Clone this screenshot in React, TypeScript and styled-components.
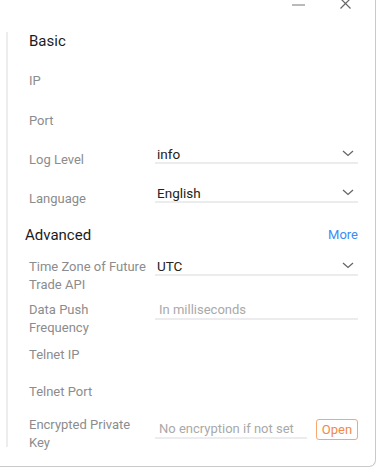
import styled, { createGlobalStyle } from 'styled-components';

const GlobalStyle = createGlobalStyle`
  html, body {
    margin: 0;
    padding: 0;
    background: #ffffff;
  }
  body {
    font-family: Roboto, "Noto Sans", sans-serif;
  }
`;

const Window = styled.div`
  position: relative;
  box-sizing: border-box;
  width: 376px;
  height: 467px;
  background: #fff;
  border-right: 1px solid #c9c9c9;
  border-bottom: 1px solid #c9c9c9;
  border-bottom-right-radius: 7px;
  overflow: hidden;
`;

const TitleBar = styled.div`
  height: 32px;
  display: flex;
  justify-content: flex-end;
  align-items: flex-start;
  padding-right: 24px;
  gap: 35px;
`;

const WinButton = styled.div<{ $top: number }>`
  margin-top: ${p => p.$top}px;
  display: flex;
`;

const Panel = styled.div`
  margin-left: 6px;
  border-left: 2px solid #ededed;
  height: 415px;
  padding-left: 21px;
  padding-right: 17px;
`;

const Heading = styled.div<{ $h: number; $indent?: number }>`
  height: ${p => p.$h}px;
  display: flex;
  justify-content: space-between;
  align-items: flex-start;
  margin-left: ${p => p.$indent ?? 0}px;
  font-size: 15px;
  line-height: 18px;
  color: #1c1c1c;
`;

const MoreLink = styled.span`
  font-size: 13px;
  color: #3b8cf5;
  line-height: 18px;
`;

const Row = styled.div<{ $h: number }>`
  height: ${p => p.$h}px;
  display: grid;
  grid-template-columns: 126px 1fr;
  align-items: start;
`;

const Label = styled.div<{ $offset?: number }>`
  padding-top: ${p => p.$offset ?? 0}px;
  font-size: 13px;
  line-height: 18px;
  color: #8c8c8c;
`;

const Select = styled.div`
  display: flex;
  justify-content: space-between;
  align-items: center;
  height: 17px;
  padding: 0 4px 0 2px;
  border-bottom: 2px solid #ececef;
  font-size: 13.5px;
  color: #222;
`;

const InputLine = styled.div<{ $top?: number }>`
  display: flex;
  align-items: center;
  gap: 9px;
  padding-top: ${p => p.$top ?? 0}px;
`;

const Field = styled.div`
  flex: 1;
  height: 17px;
  padding-left: 4px;
  border-bottom: 2px solid #ececef;
  font-size: 13px;
  line-height: 17px;
  color: #a9a9a9;
`;

const OpenButton = styled.button`
  box-sizing: border-box;
  width: 42px;
  height: 21px;
  padding: 0;
  background: #fff;
  border: 1.5px solid #f6a772;
  border-radius: 3px;
  color: #f0894a;
  font-family: inherit;
  font-size: 13px;
  line-height: 17px;
`;

function Chevron() {
  return (
    <svg width="12" height="7" viewBox="0 0 12 7">
      <polyline points="1,1 6,5.5 11,1" fill="none" stroke="#666" strokeWidth="1.3" />
    </svg>
  );
}

function SelectBox({ value }: { value: string }) {
  return (
    <Select>
      <span>{value}</span>
      <Chevron />
    </Select>
  );
}

export default function App() {
  return (
    <>
      <GlobalStyle />
      <Window>
        <TitleBar>
          <WinButton $top={4}>
            <svg width="13" height="2" viewBox="0 0 13 2">
              <line x1="0" y1="1" x2="13" y2="1" stroke="#777" strokeWidth="1.2" />
            </svg>
          </WinButton>
          <WinButton $top={-2}>
            <svg width="11" height="11" viewBox="0 0 11 11">
              <path d="M0.5 0.5 L10.5 10.5 M10.5 0.5 L0.5 10.5" stroke="#666" strokeWidth="1.2" />
            </svg>
          </WinButton>
        </TitleBar>
        <Panel>
          <Heading $h={40}>Basic</Heading>
          <Row $h={40}>
            <Label>IP</Label>
          </Row>
          <Row $h={33}>
            <Label>Port</Label>
          </Row>
          <Row $h={39}>
            <Label $offset={6}>Log Level</Label>
            <SelectBox value="info" />
          </Row>
          <Row $h={42}>
            <Label $offset={6}>Language</Label>
            <SelectBox value="English" />
          </Row>
          <Heading $h={31} $indent={-4}>
            <span>Advanced</span>
            <MoreLink>More</MoreLink>
          </Heading>
          <Row $h={44}>
            <Label $offset={1}>
              Time Zone of Future
              <br />
              Trade API
            </Label>
            <SelectBox value="UTC" />
          </Row>
          <Row $h={45}>
            <Label>
              Data Push
              <br />
              Frequency
            </Label>
            <InputLine>
              <Field>In milliseconds</Field>
            </InputLine>
          </Row>
          <Row $h={37}>
            <Label>Telnet IP</Label>
          </Row>
          <Row $h={33}>
            <Label>Telnet Port</Label>
          </Row>
          <Row $h={40}>
            <Label>
              Encrypted Private
              <br />
              Key
            </Label>
            <InputLine $top={3}>
              <Field>No encryption if not set</Field>
              <OpenButton>Open</OpenButton>
            </InputLine>
          </Row>
        </Panel>
      </Window>
    </>
  );
}
